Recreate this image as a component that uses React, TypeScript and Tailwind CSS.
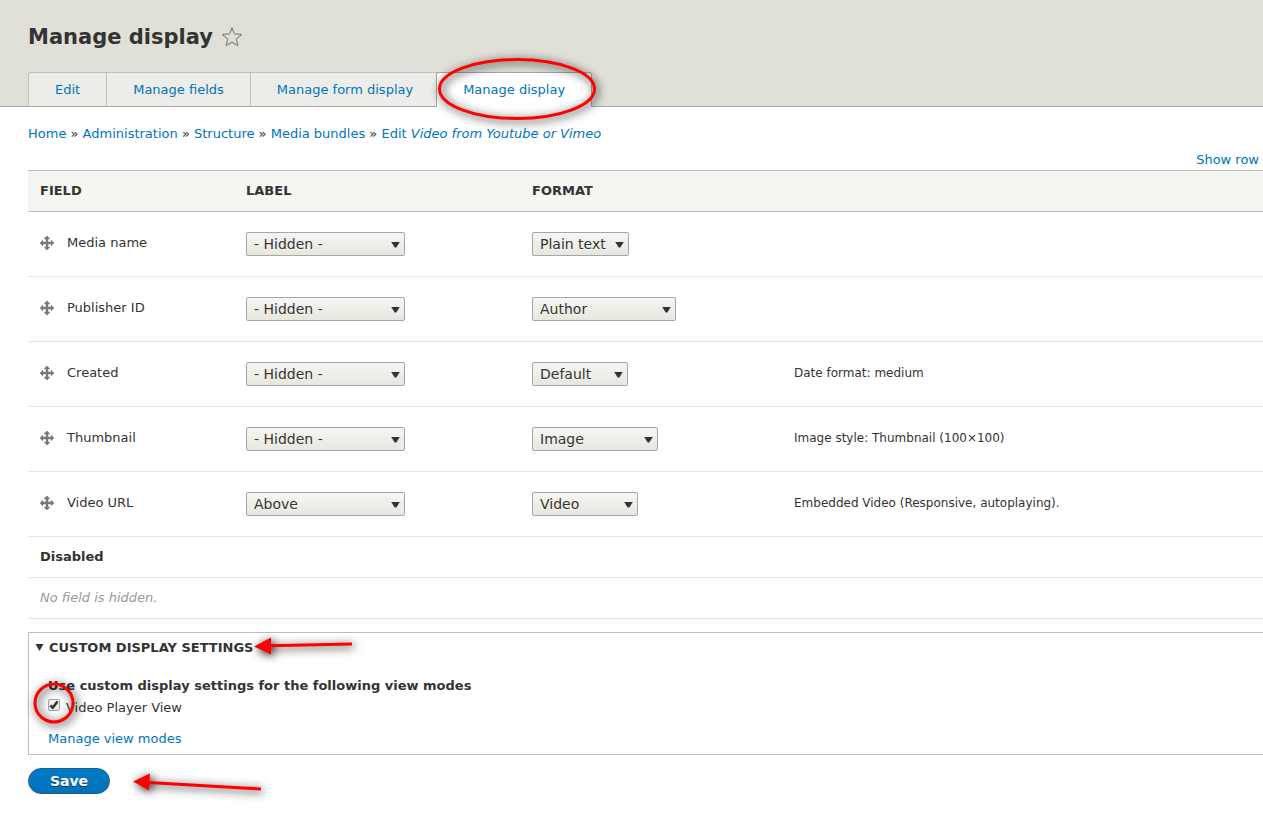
import React from "react";

const tabs = [
  { name: "Edit", active: false },
  { name: "Manage fields", active: false },
  { name: "Manage form display", active: false },
  { name: "Manage display", active: true },
];

const crumbs = ["Home", "Administration", "Structure", "Media bundles"];

const rows = [
  { name: "Media name", label: "- Hidden -", format: "Plain text", width: "w-[97px]", summary: "" },
  { name: "Publisher ID", label: "- Hidden -", format: "Author", width: "w-36", summary: "" },
  { name: "Created", label: "- Hidden -", format: "Default", width: "w-24", summary: "Date format: medium" },
  { name: "Thumbnail", label: "- Hidden -", format: "Image", width: "w-[126px]", summary: "Image style: Thumbnail (100×100)" },
  { name: "Video URL", label: "Above", format: "Video", width: "w-[106px]", summary: "Embedded Video (Responsive, autoplaying)." },
];

function Select({ value, label, width }: { value: string; label: string; width: string }) {
  return (
    <span className={`relative block ${width}`}>
      <select
        aria-label={label}
        defaultValue={value}
        className="block h-6 w-full appearance-none rounded-[2px] border border-[#a6a6a6] bg-linear-to-b from-[#f6f6f3] to-[#e7e7df] pl-[7px] text-sm leading-[22px] text-[#333] [text-shadow:0_1px_hsla(0,0%,100%,0.6)]"
      >
        <option>{value}</option>
      </select>
      <svg className="pointer-events-none absolute top-[10px] right-[5px] h-[6px] w-[9px]" viewBox="0 0 9 6">
        <path d="M0.200 0h8.600L5.300 5.500h-1.600z" fill="#333" />
      </svg>
    </span>
  );
}

function MoveIcon() {
  return (
    <svg className="h-[14px] w-[14px] shrink-0" viewBox="1 1 14 14" fill="#787878" stroke="#787878" strokeWidth="0.4">
      <path d="M14.904 7.753l-2.373-2.372c-.291-.292-.529-.193-.529.22v1.399h-3v-3h1.398c.414 0 .512-.239.221-.53l-2.371-2.372c-.137-.136-.36-.136-.497 0l-2.372 2.372c-.292.292-.193.53.22.53h1.399v3h-3v-1.369c0-.413-.239-.511-.53-.22l-2.372 2.372c-.136.136-.136.359 0 .494l2.372 2.372c.291.292.53.193.53-.22v-1.429h3v3h-1.4c-.413 0-.511.238-.22.529l2.374 2.373c.137.137.36.137.495 0l2.373-2.373c.29-.291.19-.529-.222-.529h-1.398v-3h3v1.4c0 .412.238.511.529.219l2.373-2.371c.137-.137.137-.359 0-.496z" />
    </svg>
  );
}

export default function App() {
  return (
    <div className="overflow-x-hidden pb-8 font-['DejaVu_Sans',sans-serif] text-[13px] leading-5 text-[#333]">
      <header className="border-b border-[#a6a6a6] bg-[#e0e0d8] pt-[21px] pl-7">
        <div className="flex items-center gap-[9px]">
          <h1 className="text-[21px] leading-8 font-bold">Manage display</h1>
          <button type="button" aria-label="Add to shortcuts">
            <svg className="block h-5 w-5" viewBox="0 0 20 20" fill="none" stroke="#85857c" strokeWidth="1.2" strokeLinejoin="round">
              <path d="M10 0.700l2.500 6.200 6.400.400q.600.300.100.800l-4.800 4 1.600 5.600q0 .800-.700.500L10 15.100l-5.100 3.100q-.700.300-.700-.5l1.600-5.600-4.800-4q-.5-.5.100-.8l6.400-.4z" />
            </svg>
          </button>
        </div>
        <nav className="mt-[19px]">
          <ul className="-mb-px flex">
            {tabs.map((tab, i) => (
              <li key={tab.name} className={tab.active ? "relative -ml-[3px]" : ""}>
                <a
                  href="#"
                  className={`block h-[35px] border-t border-l px-[26px] pt-[7px] text-[#0074bd] ${i === 0 ? "rounded-tl-[3px]" : ""} ${
                    tab.active
                      ? "rounded-t-[3px] border-r border-[#a6a6a6] bg-white"
                      : "border-b border-[#bfbfba] border-b-[#a6a6a6] bg-[#ecede8]"
                  }`}
                >
                  {tab.name}
                </a>
                {tab.active && (
                  <svg
                    className="pointer-events-none absolute -top-4 left-0 h-16 w-40 overflow-visible drop-shadow-[2px_2px_5px_rgba(0,0,0,0.95)]"
                    viewBox="0 0 160 64"
                    fill="none"
                  >
                    <ellipse cx="81" cy="33" rx="77.500" ry="29.500" stroke="red" strokeWidth="3" />
                  </svg>
                )}
              </li>
            ))}
          </ul>
        </nav>
      </header>

      <main className="pl-7">
        <nav aria-label="Breadcrumb" className="pt-[17px]">
          {crumbs.map((crumb) => (
            <span key={crumb}>
              <a href="#" className="text-[#0074bd]">{crumb}</a>
              {" » "}
            </span>
          ))}
          <a href="#" className="text-[#0074bd]">
            Edit <em>Video from Youtube or Vimeo</em>
          </a>
        </nav>

        <div className="mt-[6px] flex justify-end pr-1">
          <button type="button" className="text-[#0074bd]">Show row</button>
        </div>

        <table className="w-full table-fixed border-separate border-spacing-0 text-left">
          <thead>
            <tr className="h-[42px] bg-[#f5f5f2] uppercase *:border-y *:border-[#bfbfba] *:pl-3">
              <th className="w-[206px]">Field</th>
              <th className="w-[286px]">Label</th>
              <th className="w-[262px]">Format</th>
              <td></td>
            </tr>
          </thead>
          <tbody>
            {rows.map((row) => (
              <tr key={row.name} className="h-[65px] *:border-b *:border-[#e6e4df] *:pl-3">
                <td>
                  <div className="flex items-center gap-[13px] pb-[2px]">
                    <MoveIcon />
                    {row.name}
                  </div>
                </td>
                <td>
                  <Select value={row.label} label={`Label display for ${row.name}`} width="w-[159px]" />
                </td>
                <td>
                  <Select value={row.format} label={`Format for ${row.name}`} width={row.width} />
                </td>
                <td className="pb-[2px] text-xs">{row.summary}</td>
              </tr>
            ))}
            <tr className="h-[41px]">
              <td colSpan={4} className="border-b border-[#e6e4df] pl-3 font-bold">Disabled</td>
            </tr>
            <tr className="h-[41px]">
              <td colSpan={4} className="border-b border-[#e6e4df] pl-3 text-[#999] italic">No field is hidden.</td>
            </tr>
          </tbody>
        </table>

        <details open className="mt-[13px] border border-r-0 border-[#bfbfbf]">
          <summary className="flex items-center gap-[5px] pt-[5px] pl-[6px] font-bold uppercase">
            <svg className="h-2 w-[9px]" viewBox="0 0 9 8">
              <path d="M0.500 0h8l-4 7z" fill="#333" />
            </svg>
            <span className="relative">
              Custom display settings
              <svg
                className="pointer-events-none absolute top-0 left-full h-5 w-[100px] overflow-visible drop-shadow-[2px_2px_5px_rgba(0,0,0,0.95)]"
                viewBox="0 0 100 20"
              >
                <path d="M1 8.500l17-9v17z" fill="red" />
                <path d="M16 7.800L99 6" stroke="red" strokeWidth="3" />
              </svg>
            </span>
          </summary>
          <div className="px-[19px] pt-[18px] pb-[5px]">
            <fieldset>
              <legend className="font-bold">Use custom display settings for the following view modes</legend>
              <div className="mt-[2px] flex items-center gap-[6px]">
                <span className="relative -mt-[6px] block h-3 w-3">
                  <input
                    id="video-player-view"
                    type="checkbox"
                    defaultChecked
                    className="block h-3 w-3 appearance-none rounded-[2px] border border-[#a6a6a6] bg-[#eee]"
                  />
                  <svg className="pointer-events-none absolute inset-0 h-3 w-3" viewBox="0 0 12 12" fill="none">
                    <path d="M2.300 6.500L4.800 8.700l4.700-6.200" stroke="#333" strokeWidth="2.600" />
                  </svg>
                  <svg
                    className="pointer-events-none absolute -top-4 -left-4 h-11 w-11 overflow-visible drop-shadow-[2px_2px_5px_rgba(0,0,0,0.95)]"
                    viewBox="0 0 44 44"
                    fill="none"
                  >
                    <circle cx="22" cy="20" r="19" stroke="red" strokeWidth="3" />
                  </svg>
                </span>
                <label htmlFor="video-player-view">Video Player View</label>
              </div>
            </fieldset>
            <a href="#" className="mt-[11px] block text-[#0074bd]">Manage view modes</a>
          </div>
        </details>

        <div className="mt-[13px] flex w-fit items-center gap-[23px]">
          <button
            type="submit"
            className="h-[26px] w-[82px] rounded-full border border-[#1e5c90] bg-linear-to-b from-[#007bc6] to-[#0071b8] text-sm leading-6 font-bold text-white [text-shadow:0_1px_hsla(0,0%,0%,0.5)]"
          >
            Save
          </button>
          <svg
            className="pointer-events-none h-[26px] w-[130px] overflow-visible drop-shadow-[2px_2px_5px_rgba(0,0,0,0.95)]"
            viewBox="0 0 130 26"
          >
            <path d="M0 13.500l17-8-1 17z" fill="red" />
            <path d="M15 14.500L128 21" stroke="red" strokeWidth="3" />
          </svg>
        </div>
      </main>
    </div>
  );
}
